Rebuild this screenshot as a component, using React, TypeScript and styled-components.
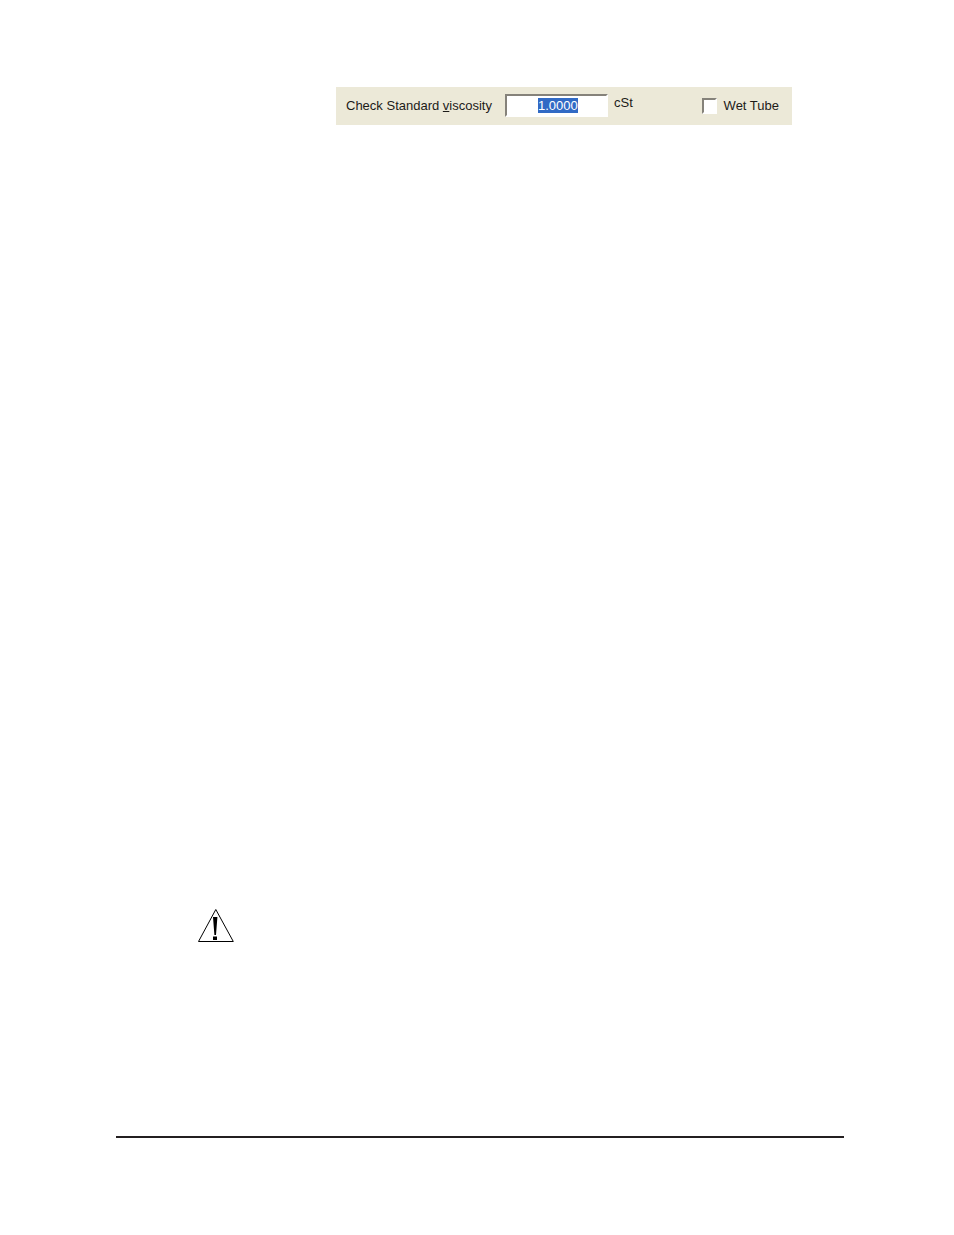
import { useEffect, useRef } from "react";
import styled, { createGlobalStyle } from "styled-components";

const GlobalStyle = createGlobalStyle`
  body {
    margin: 0;
    background: #fff;
    color: #1c1b18;
    font-family: "Liberation Sans", Arial, sans-serif;
    font-size: 13px;
    line-height: 16px;
  }
`;

const Page = styled.main`
  box-sizing: border-box;
  min-height: 100vh;
  padding: 87px 110px 97px 116px;
  display: flex;
  flex-direction: column;
`;

const Panel = styled.form`
  margin: 0 52px 0 220px;
  padding: 7px 13px 8px 10px;
  display: flex;
  align-items: flex-start;
  background: #ece9d8;
  white-space: nowrap;
`;

const FieldLabel = styled.label`
  width: 159px;
  padding-top: 4px;
`;

const ValueInput = styled.input`
  box-sizing: border-box;
  width: 103px;
  height: 23px;
  padding: 0 0 0 31px;
  border: 2px solid;
  border-color: #85827a #fff #fff #85827a;
  border-radius: 0;
  outline: none;
  background: #fff;
  color: #1c1b18;
  font: inherit;

  &::selection {
    background: #316ac5;
    color: #fff;
  }
`;

const Unit = styled.span`
  margin-left: 6px;
  padding-top: 1px;
`;

const CheckLabel = styled.label`
  margin-left: auto;
  padding-top: 4px;
  display: flex;
  align-items: center;
  gap: 7px;
`;

const CheckBox = styled.input`
  appearance: none;
  box-sizing: border-box;
  width: 15px;
  height: 16px;
  margin: 0;
  border: 2px solid;
  border-color: #85827a #fff #fff #85827a;
  background: #fff;

  &:checked {
    background: #316ac5;
  }
`;

const Warning = styled.svg`
  width: 38px;
  height: 36px;
  margin: 783px 0 0 81px;
`;

const Rule = styled.hr`
  width: 100%;
  height: 2px;
  margin: auto 0 0;
  border: 0;
  background: #231f20;
`;

export default function App() {
  const value = useRef<HTMLInputElement>(null);

  useEffect(() => {
    value.current?.focus();
    value.current?.select();
  }, []);

  return (
    <>
      <GlobalStyle />
      <Page>
        <Panel>
          <FieldLabel htmlFor="viscosity">
            Check Standard <u>v</u>iscosity
          </FieldLabel>
          <ValueInput id="viscosity" ref={value} type="text" defaultValue="1.0000" />
          <Unit>cSt</Unit>
          <CheckLabel htmlFor="wet-tube">
            <CheckBox id="wet-tube" type="checkbox" />
            Wet Tube
          </CheckLabel>
        </Panel>
        <Warning viewBox="0 0 38 36" role="img" aria-label="Warning">
          <path d="M18.8 1.5 L36.3 33.5 H1.5 Z" fill="none" stroke="#000" strokeWidth="1" />
          <path d="M16 9 H20.4 L19 27 H17.4 Z M16 28.5 H20 V32 H16 Z" fill="#000" />
        </Warning>
        <Rule />
      </Page>
    </>
  );
}
